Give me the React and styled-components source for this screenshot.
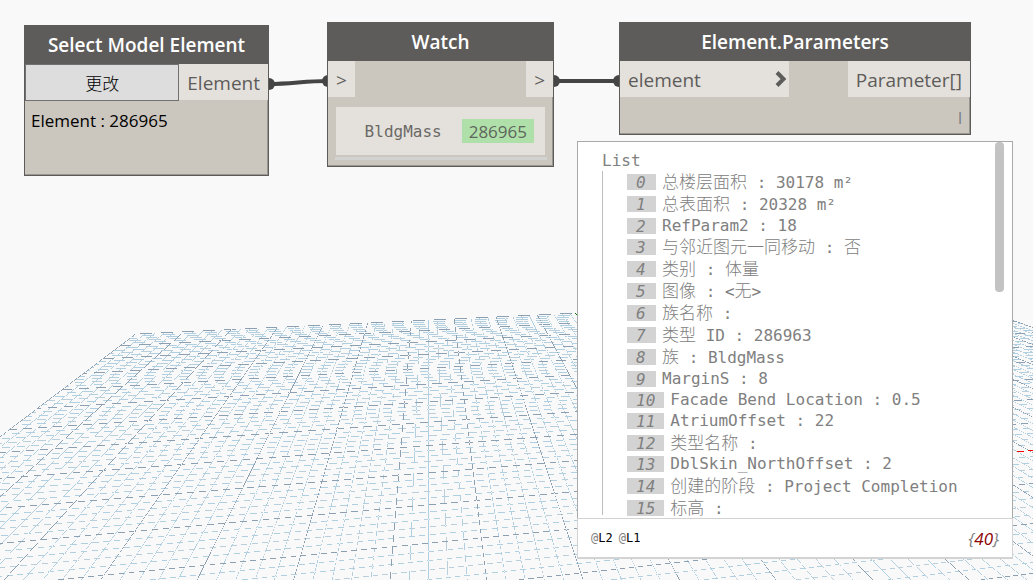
import React from "react";
import styled, { createGlobalStyle } from "styled-components";

const sans = `"Open Sans", "Noto Sans CJK SC", sans-serif`;
const mono = `"DejaVu Sans Mono", "Noto Sans CJK SC", monospace`;

const GlobalStyle = createGlobalStyle`
  *, *::before, *::after { box-sizing: border-box; }
  body { margin: 0; background: #f9f9f9; font-family: ${sans}; }
`;

const Workspace = styled.main`
  position: relative;
  min-height: 100vh;
  overflow: hidden;
`;

const Layer = styled.svg`
  position: absolute;
  inset: 0;
  width: 100%;
  height: 100%;
`;

const Node = styled.section`
  position: absolute;
  left: ${(p) => p.$x}px;
  top: ${(p) => p.$y}px;
  width: ${(p) => p.$width}px;
  min-height: ${(p) => p.$minHeight}px;
  border: 1px solid #5e5c5a;
  background: #cbc6be;
  box-shadow: inset -1px -1px 0 #99958f;
`;

const NodeTitle = styled.h2`
  margin: 0;
  height: 38px;
  background: #5e5c5a;
  color: #fff;
  font-size: 19px;
  font-weight: 600;
  line-height: 38px;
  text-align: center;
`;

const PortRow = styled.div`
  display: flex;
  justify-content: space-between;
  align-items: flex-start;
`;

const Port = styled.div`
  display: flex;
  justify-content: space-between;
  width: ${(p) => p.$width || "auto"};
  height: 36px;
  padding: 0 8px;
  background: #e4e1dc;
  color: #5e5c5a;
  font-size: 19px;
  line-height: 38px;
`;

const Chevron = styled.svg`
  align-self: center;
  width: 12px;
  height: 18px;
  margin-right: -6px;
`;

const ChangeButton = styled.button`
  flex: 1;
  height: 37px;
  border: 1px solid #707070;
  background: #ddd;
  color: #000;
  font-family: ${sans};
  font-size: 17px;
  font-weight: 300;
  padding: 0;
`;

const Selection = styled.p`
  margin: 0;
  padding: 8px 6px;
  color: #000;
  font-size: 17px;
  line-height: 24px;
`;

const WatchBox = styled.div`
  display: flex;
  align-items: center;
  justify-content: flex-end;
  gap: 20px;
  height: 48px;
  margin: 10px 8px 0;
  padding: 0 11px;
  background: #e4e1dc;
  color: #6b6966;
  font-family: ${mono};
  font-size: 16px;
`;

const IdLink = styled.a`
  height: 24px;
  padding: 0 7px;
  background: #b0e0aa;
  color: #5f665c;
  font-family: ${sans};
  font-size: 17px;
  line-height: 26px;
  text-decoration: none;
`;

const ResizeBar = styled.div`
  height: 3px;
  margin: 2px 6px 0 7px;
  background: #d3d3d3;
`;

const Lacing = styled.div`
  padding: 8px 8px 0;
  color: #777c82;
  font-size: 16px;
  line-height: 26px;
  text-align: right;
`;

const Preview = styled.section`
  position: absolute;
  left: 577px;
  top: 141px;
  width: 436px;
  background: #fff;
  color: #808080;
  font-family: ${mono};
  font-size: 16px;
`;

const ListView = styled.div`
  height: 377px;
  padding: 9px 0 0 24px;
  border: 1px solid #a9a9a9;
  border-bottom: 0;
  overflow: hidden;
`;

const ListTitle = styled.h3`
  margin: 0;
  font-size: 16px;
  font-weight: 400;
  line-height: 20px;
`;

const Items = styled.ol`
  display: grid;
  grid-auto-rows: 1fr;
  height: 348px;
  margin: 0;
  padding: 0 0 0 25px;
  list-style: none;
  background: linear-gradient(#bdbdbd, #bdbdbd) 0 0 / 1px 344px no-repeat;
`;

const Item = styled.li`
  display: flex;
  align-items: center;
  gap: 6px;
  white-space: pre;
`;

const Index = styled.span`
  min-width: 29px;
  height: 16px;
  padding: 0 9px;
  background: #d3d3d3;
  font-size: 16px;
  font-style: italic;
  line-height: 17px;
`;

const Value = styled.span`
  line-height: 20px;
`;

const Han = styled.span`
  font-family: "Noto Sans CJK SC", sans-serif;
  font-size: 17px;
  font-weight: 300;
  line-height: 20px;
`;

const ScrollThumb = styled.div`
  position: absolute;
  top: 1px;
  right: 9px;
  width: 9px;
  height: 150px;
  border-radius: 4px;
  background: #c3c3c3;
`;

const PreviewFooter = styled.footer`
  display: flex;
  align-items: center;
  justify-content: space-between;
  height: 41px;
  border: 1px solid #d3d3d3;
  border-bottom-width: 2px;
  padding: 0 13px;
`;

const Levels = styled.div`
  display: flex;
  gap: 6px;
  color: #000;
  font-size: 12px;
`;

const At = styled.span`
  color: #808080;
`;

const Count = styled.span`
  font-family: ${sans};
  font-size: 17px;
  font-style: italic;
`;

const Total = styled.span`
  color: #8b0000;
`;

// Ground grid in perspective: one family of lines runs to each vanishing point.
const HORIZON = 112;
const DEPTH_VP = 428.5;
const SIDE_VP = 4790;
const COLUMNS = 100;
const ROWS = 92;
const EXTENT_X = 1920;
const EXTENT_Y = 1200;
const LINE_WIDTH = 0.57;

const columnSlope = (i) => (0.2 + 96.3 * (i / 5 - 6.4)) / (579 - HORIZON);
const rowSlope = (j) => 1e4 / (46.66 - 0.439 * j) / (SIDE_VP - 297);

function crossing(i, j) {
  const a = columnSlope(i);
  const b = rowSlope(j);
  const dy = (b * (SIDE_VP - DEPTH_VP)) / (1 + a * b);
  return [DEPTH_VP + a * dy, HORIZON + dy];
}

// Splits a thin line into whole-pixel runs, leaving out the pixels whose
// centre it misses, which gives the broken look of an unsmoothed hairline.
function pixelRuns([x1, y1], [x2, y2]) {
  const flat = Math.abs(x2 - x1) >= Math.abs(y2 - y1);
  let [u1, v1, u2, v2] = flat ? [x1, y1, x2, y2] : [y1, x1, y2, x2];
  if (u1 > u2) [u1, v1, u2, v2] = [u2, v2, u1, v1];
  const slope = (v2 - v1) / (u2 - u1);
  const half = (LINE_WIDTH * Math.hypot(1, slope)) / 2;
  const first = Math.max(0, Math.round(u1));
  const last = Math.min(flat ? EXTENT_X : EXTENT_Y, Math.round(u2));
  const limit = flat ? EXTENT_Y : EXTENT_X;
  let d = "";
  let start = -1;
  let level = 0;
  for (let u = first; u <= last; u += 1) {
    const v = v1 + slope * (u + 0.5 - u1);
    const cell = Math.floor(v);
    const inside = v >= 0 && v < limit;
    const on = u < last && inside && Math.abs(v - cell - 0.5) < half;
    if (start >= 0 && (!on || cell !== level)) {
      d += flat
        ? `M${start} ${level}H${u}V${level + 1}H${start}Z`
        : `M${level} ${start}V${u}H${level + 1}V${start}Z`;
      start = -1;
    }
    if (on && start < 0) {
      start = u;
      level = cell;
    }
  }
  return d;
}

function gridPaths() {
  const paths = { "#b0d0e2": "", "#b9cfdc": "", "#8ca0b2": "" };
  const add = (n, from, to) => {
    const color = n % 5 === 0 ? "#8ca0b2" : n % 5 === 3 ? "#b9cfdc" : "#b0d0e2";
    paths[color] += pixelRuns(from, to);
  };
  for (let j = 0; j <= ROWS; j += 1) add(j, crossing(0, j), crossing(COLUMNS, j));
  for (let i = 0; i <= COLUMNS; i += 1) add(i, crossing(i, 0), crossing(i, ROWS));
  return Object.entries(paths);
}

const GRID = gridPaths();

function GroundGrid() {
  return (
    <Layer aria-hidden="true" shapeRendering="crispEdges">
      {GRID.map(([color, d]) => (
        <path key={color} d={d} fill={color} fillRule="nonzero" />
      ))}
      <path d="M1017 451.5h7M1028 450.5h14" stroke="#f00" />
      <path d="M575 313.5h1M576 314.5h2" stroke="#008000" />
    </Layer>
  );
}

function Connectors() {
  return (
    <Layer aria-hidden="true" fill="none" stroke="#454545" strokeWidth="4">
      <path d="M269 84C290 84 306 81 327 81" />
      <path d="M554 81H619" />
      <g fill="#454545" stroke="none">
        <circle cx="269" cy="84" r="6" />
        <circle cx="328" cy="81" r="6" />
        <circle cx="554" cy="81" r="6" />
        <circle cx="619" cy="81" r="6" />
      </g>
    </Layer>
  );
}

const PARAMETERS = [
  "总楼层面积 : 30178 m²",
  "总表面积 : 20328 m²",
  "RefParam2 : 18",
  "与邻近图元一同移动 : 否",
  "类别 : 体量",
  "图像 : <无>",
  "族名称 :",
  "类型 ID : 286963",
  "族 : BldgMass",
  "MarginS : 8",
  "Facade Bend Location : 0.5",
  "AtriumOffset : 22",
  "类型名称 :",
  "DblSkin_NorthOffset : 2",
  "创建的阶段 : Project Completion",
  "标高 :",
];

function MixedText({ text }) {
  return text
    .split(/([\u4e00-\u9fff]+)/)
    .filter(Boolean)
    .map((part, k) => (/[\u4e00-\u9fff]/.test(part) ? <Han key={k}>{part}</Han> : part));
}

export default function App() {
  return (
    <Workspace>
      <GlobalStyle />
      <GroundGrid />
      <Connectors />

      <Node $x={24} $y={25} $width={245} $minHeight={151}>
        <NodeTitle>Select Model Element</NodeTitle>
        <PortRow>
          <ChangeButton type="button">更改</ChangeButton>
          <Port>Element</Port>
        </PortRow>
        <Selection>Element : 286965</Selection>
      </Node>

      <Node $x={327} $y={22} $width={227} $minHeight={145}>
        <NodeTitle>Watch</NodeTitle>
        <PortRow>
          <Port>&gt;</Port>
          <Port>&gt;</Port>
        </PortRow>
        <WatchBox>
          <span>BldgMass</span>
          <IdLink href="#286965">286965</IdLink>
        </WatchBox>
        <ResizeBar />
      </Node>

      <Node $x={619} $y={22} $width={352} $minHeight={113}>
        <NodeTitle>Element.Parameters</NodeTitle>
        <PortRow>
          <Port $width="169px">
            element
            <Chevron viewBox="0 0 12 18" aria-hidden="true">
              <path d="M2 2.500L8.500 9L2 15.500" fill="none" stroke="#5e5c5a" strokeWidth="4" />
            </Chevron>
          </Port>
          <Port>Parameter[]</Port>
        </PortRow>
        <Lacing>l</Lacing>
      </Node>

      <Preview>
        <ListView>
          <ListTitle>List</ListTitle>
          <Items>
            {PARAMETERS.map((text, index) => (
              <Item key={index}>
                <Index>{index}</Index>
                <Value>
                  <MixedText text={text} />
                </Value>
              </Item>
            ))}
          </Items>
        </ListView>
        <ScrollThumb />
        <PreviewFooter>
          <Levels>
            <span><At>@</At>L2</span>
            <span><At>@</At>L1</span>
          </Levels>
          <Count>
            {"{"}
            <Total>40</Total>
            {"}"}
          </Count>
        </PreviewFooter>
      </Preview>
    </Workspace>
  );
}
